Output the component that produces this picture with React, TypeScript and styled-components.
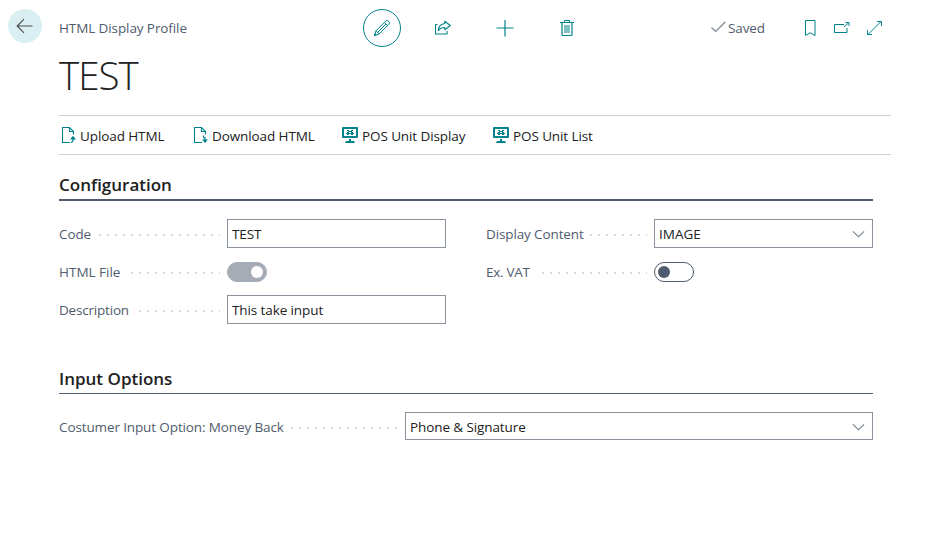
import React from 'react';
import styled, { createGlobalStyle } from 'styled-components';

const TEAL = '#00838a';
const SLATE = '#505c6d';

const GlobalStyle = createGlobalStyle`
  * { box-sizing: border-box; }
  body {
    margin: 0;
    background: #fff;
    color: #212121;
    font-family: 'Open Sans', 'Noto Sans', sans-serif;
    font-size: 13.5px;
    line-height: 20px;
    overflow: hidden;
  }
`;

const Page = styled.main`
  width: 949px;
  height: 549px;
  overflow: hidden;
  background: #fff;
`;

const Text = styled.span<{ $track?: number }>`
  white-space: nowrap;
  letter-spacing: ${p => p.$track ?? -0.1}px;
`;

const Header = styled.header`
  display: flex;
  height: 47px;
  padding: 9px 0 0 8px;
`;

const BackButton = styled.button`
  display: grid;
  place-items: center;
  width: 34px;
  height: 34px;
  padding: 0;
  border: 0;
  border-radius: 50%;
  background: #d9eff1;
`;

const Caption = styled.div`
  width: 304px;
  margin-left: 17px;
  padding-top: 9px;
  color: ${SLATE};
`;

const Actions = styled.div`
  display: flex;
  align-items: center;
  width: 348px;
  height: 38px;
  gap: 23.6px;
`;

const Action = styled.button<{ $circled?: boolean }>`
  display: grid;
  place-items: center;
  width: 38px;
  height: 38px;
  padding: 0;
  border: ${p => (p.$circled ? `1px solid ${TEAL}` : '0')};
  border-radius: 50%;
  background: transparent;
  color: ${TEAL};
`;

const Status = styled.div`
  display: flex;
  width: 93px;
  gap: 2px;
  padding-top: 9px;
  color: ${SLATE};

  svg { margin-top: 2px; }
`;

const WindowTools = styled.div`
  display: flex;
  gap: 16px;
  padding-top: 11px;
  color: ${TEAL};
`;

const Title = styled.h1`
  height: 68px;
  margin: 0 0 0 59px;
  font-weight: 300;
  font-size: 38.5px;
  line-height: 56px;
  letter-spacing: -1px;
`;

const Toolbar = styled.nav`
  display: flex;
  width: 832px;
  height: 40px;
  margin-left: 59px;
  padding-left: 1px;
  border-top: 1px solid #d2d2d2;
  border-bottom: 1px solid #d2d2d2;
`;

const Command = styled.button<{ $width: number }>`
  display: flex;
  align-items: center;
  width: ${p => p.$width}px;
  gap: 4px;
  padding: 2px 0 0;
  border: 0;
  background: transparent;
  color: #212121;
  font: inherit;

  svg { flex: none; margin-top: -3px; }
`;

const Section = styled.section<{ $gap: number }>`
  width: 814px;
  margin: ${p => p.$gap}px 0 0 59px;
`;

const SectionTitle = styled.h2<{ $rule: number }>`
  margin: 0;
  height: ${p => 28 + p.$rule}px;
  padding-top: 2px;
  border-bottom: ${p => p.$rule}px solid ${SLATE};
  font-size: 17px;
  font-weight: 600;
  line-height: 24px;
`;

const Columns = styled.div`
  display: grid;
  grid-template-columns: 387px 387px;
  gap: 40px;
  padding-top: 18px;
`;

const Column = styled.div`
  display: flex;
  flex-direction: column;
  gap: 9px;
`;

const Field = styled.div`
  display: flex;
  align-items: center;
  height: 29px;
`;

const Leader = styled.div<{ $width: number }>`
  width: ${p => p.$width}px;
  height: 20px;
  margin-right: 7px;
  color: ${SLATE};
  background: linear-gradient(90deg, #dadada 2px, transparent 2px) 0 10px / 8px 2px repeat-x;

  span { display: inline-block; padding-right: 6px; background: #fff; }
`;

const Box = styled.div<{ $width: number; $height?: number }>`
  display: flex;
  align-items: center;
  justify-content: space-between;
  width: ${p => p.$width}px;
  height: ${p => p.$height ?? 29}px;
  padding: 1px 7px 0 4px;
  border: 1px solid #8a929e;
  color: #212121;
`;

const Toggle = styled.div<{ $on?: boolean }>`
  display: flex;
  align-items: center;
  justify-content: ${p => (p.$on ? 'flex-end' : 'flex-start')};
  width: 40px;
  height: 20px;
  padding: 0 3px;
  border: 1px solid ${p => (p.$on ? '#a6acb6' : SLATE)};
  border-radius: 10px;
  background: ${p => (p.$on ? '#a6acb6' : '#fff')};

  &::after {
    content: '';
    width: 12px;
    height: 12px;
    border-radius: 50%;
    background: ${p => (p.$on ? '#fff' : SLATE)};
  }
`;

const WideField = styled(Field)`
  height: 28px;
  margin-top: 18px;

  ${Leader} { margin-top: 2px; }
`;

const line = { fill: 'none', stroke: 'currentColor', strokeWidth: 1 };

const ArrowLeft = () => (
  <svg width="18" height="16" viewBox="0 0 18 16" {...line} stroke="#505050" strokeWidth="1.2">
    <path d="M16.5 8H1.5M8 1.2 1.2 8 8 14.8" />
  </svg>
);
const Pencil = () => (
  <svg width="18" height="18" viewBox="0 0 18 18" {...line}>
    <path d="M1.5 16.5 3 11.8 12.8 2a2.3 2.3 0 0 1 3.2 3.2L6.2 15ZM3 11.8l3.2 3.2M11.4 3.4l3.2 3.2M4.6 13.4l8.4-8.4M1.5 16.5l1.8-.5-1.3-1.3Z" />
  </svg>
);
const Share = () => (
  <svg width="18" height="16" viewBox="0 0 18 16" {...line} strokeWidth="1.1">
    <path d="M2.5 4.5h-2v9.5h11.5v-3" />
    <path d="M9.8 1.3 15.3 5.5l-5.5 4.2V7.5C7 7.5 5 8.3 3.4 10.6 3.5 6.8 6 3.9 9.8 3.5Z" strokeLinejoin="round" />
  </svg>
);
const Plus = () => (
  <svg width="18" height="18" viewBox="0 0 18 18" {...line} strokeWidth="1.2">
    <path d="M.5 9h17M9 1v16.5" />
  </svg>
);
const Trash = () => (
  <svg width="14" height="16" viewBox="0 0 14 16" {...line}>
    <path d="M0 2.5h14M4.5 2.5v-2h5v2" />
    <path d="M2 3v11.5q0 1 1 1h8q1 0 1-1V3" strokeWidth="1.2" />
    <path d="M4 5h6v8H4z" fill={TEAL} fillOpacity=".5" stroke="none" />
  </svg>
);
const Check = () => (
  <svg width="15" height="15" viewBox="0 0 15 15" {...line} stroke="#7b8490" strokeWidth="1.2">
    <path d="m.5 7.5 4.2 4L14.2 2" />
  </svg>
);
const Bookmark = () => (
  <svg width="13" height="16" viewBox="0 0 13 16" {...line}>
    <path d="M1.5.5h9.5v15L6.2 12.8l-4.7 2.7Z" />
  </svg>
);
const PopOut = () => (
  <svg width="17" height="16" viewBox="0 0 17 16" {...line}>
    <path d="M11 4.5H1.5v8h12.5V8M11 7l4.5-4M12.5 2.5h3.5v3.5" />
  </svg>
);
const Expand = () => (
  <svg width="16" height="16" viewBox="0 0 16 16" {...line}>
    <path d="M2 14.5 15 1.5M11 1.5h4.5V6M1.5 10v4.5H6" />
  </svg>
);
const FileArrow = ({ down }: { down?: boolean }) => (
  <svg width="16" height="18" viewBox="0 0 16 18" {...line} strokeWidth="1.1" color={TEAL}>
    <path d="M10 16.5H2.5v-15h7l4 4v3M9.5 1.5v4h4" />
    {down ? (
      <>
        <path d="M11.5 9.5v1.5q0 1 1.5 1v3" strokeWidth="1.3" />
        <path d="M10 13.5h6L13 17Z" fill={TEAL} stroke="none" />
      </>
    ) : (
      <>
        <path d="M11 16.6q2-.4 2-2.6v-2" strokeWidth="1.3" />
        <path d="M10 13.5h6L13 9.8Z" fill={TEAL} stroke="none" />
      </>
    )}
  </svg>
);
const Monitor = () => (
  <svg width="16" height="16" viewBox="0 0 16 16">
    <path fill={TEAL} d="M0 1q0-1 1-1h14q1 0 1 1v9q0 1-1 1H1q-1 0-1-1ZM7 12h2v2h3l1 2H3l1-2h3Z" />
    <path fill="#fff" d="M2 2h12v7H2z" />
    <path fill={TEAL} d="M5 3h2v1h2V3h2v1h-1v1h1v1h1v1h-1v1H9V7H7v1H5V7H4V6h1V5h1V4H5Z" />
    <path fill="#fff" d="M7 5h2v1H7z" />
  </svg>
);
const Chevron = () => (
  <svg width="13" height="8" viewBox="0 0 13 8" {...line} stroke="#7b8490" strokeWidth="1.1">
    <path d="m.9 1.3 5.6 5.4 5.6-5.4" />
  </svg>
);

export default function App() {
  return (
    <Page>
      <GlobalStyle />
      <Header>
        <BackButton aria-label="Back"><ArrowLeft /></BackButton>
        <Caption><Text>HTML Display Profile</Text></Caption>
        <Actions>
          <Action $circled aria-label="Edit"><Pencil /></Action>
          <Action aria-label="Share"><Share /></Action>
          <Action aria-label="New"><Plus /></Action>
          <Action aria-label="Delete"><Trash /></Action>
        </Actions>
        <Status><Check /><Text>Saved</Text></Status>
        <WindowTools><Bookmark /><PopOut /><Expand /></WindowTools>
      </Header>
      <Title>TEST</Title>
      <Toolbar>
        <Command $width={132}><FileArrow /><Text>Upload HTML</Text></Command>
        <Command $width={150}><FileArrow down /><Text>Download HTML</Text></Command>
        <Command $width={151}><Monitor /><Text>POS Unit Display</Text></Command>
        <Command $width={110}><Monitor /><Text>POS Unit List</Text></Command>
      </Toolbar>
      <Section $gap={16}>
        <SectionTitle $rule={2}><Text $track={0}>Configuration</Text></SectionTitle>
        <Columns>
          <Column>
            <Field><Leader $width={161}><Text>Code</Text></Leader><Box $width={219}><Text>TEST</Text></Box></Field>
            <Field><Leader $width={161}><Text $track={0}>HTML File</Text></Leader><Toggle $on /></Field>
            <Field><Leader $width={161}><Text $track={-0.2}>Description</Text></Leader><Box $width={219}><Text>This take input</Text></Box></Field>
          </Column>
          <Column>
            <Field><Leader $width={161}><Text $track={-0.12}>Display Content</Text></Leader><Box $width={219}><Text $track={0}>IMAGE</Text><Chevron /></Box></Field>
            <Field><Leader $width={161}><Text $track={-0.3}>Ex. VAT</Text></Leader><Toggle /></Field>
          </Column>
        </Columns>
      </Section>
      <Section $gap={41}>
        <SectionTitle $rule={1}><Text $track={0}>Input Options</Text></SectionTitle>
        <WideField>
          <Leader $width={339}><Text $track={-0.12}>Costumer Input Option: Money Back</Text></Leader>
          <Box $width={468} $height={28}><Text>Phone &amp; Signature</Text><Chevron /></Box>
        </WideField>
      </Section>
    </Page>
  );
}
